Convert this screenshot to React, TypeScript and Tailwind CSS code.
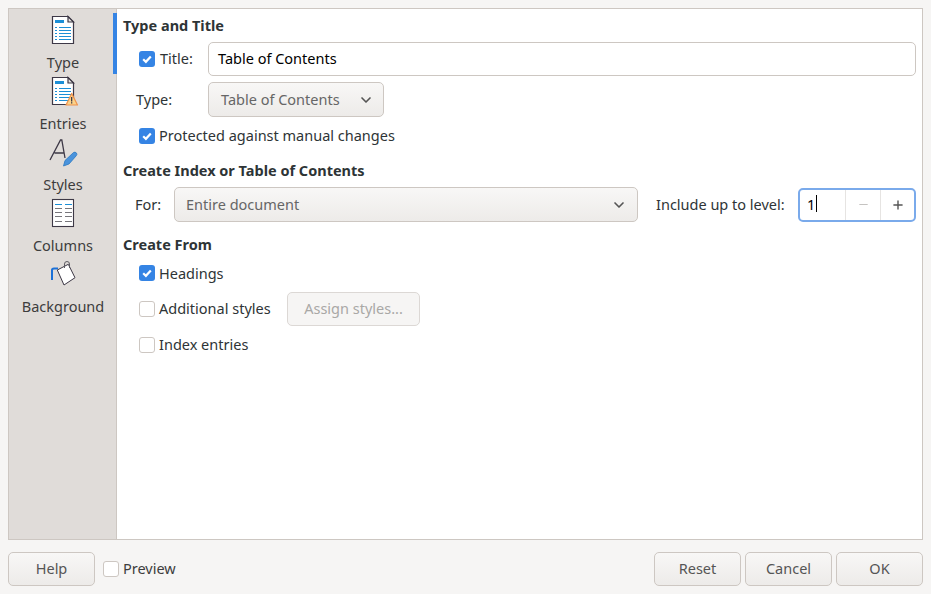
import type { ReactNode } from 'react';
import { ChevronDown, Minus, Plus } from 'lucide-react';

function DocIcon({ warn }: { warn?: boolean }) {
  return (
    <svg width="24" height="30" viewBox="0 0 24 30" className="overflow-visible">
      <path d="M1.5 1.5H17L22.5 7V28.5H1.5Z" fill="#fff" stroke="#3d3846" strokeWidth="1.2" />
      <path d="M17 1.5V7H22.5Z" fill="#e8e6e3" stroke="#3d3846" strokeWidth="1.2" />
      <rect x="4" y="5" width="9" height="3" fill="#1c8fd6" />
      <g fill="#1c8fd6">
        <rect x="4" y="12" width="2" height="1" />
        <rect x="4" y="15" width="2" height="1" />
        <rect x="4" y="18" width="2" height="1" />
        <rect x="4" y="21" width="2" height="1" />
        <rect x="4" y="24" width="2" height="1" />
        <rect x="8" y="12" width="12" height="1" />
        <rect x="8" y="15" width="12" height="1" />
        <rect x="8" y="18" width="12" height="1" />
        <rect x="8" y="21" width="12" height="1" />
        <rect x="8" y="24" width="12" height="1" />
      </g>
      {warn && (
        <g>
          <path d="M20.7 17.5L26.5 29H15Z" fill="#fbd38a" stroke="#f0924a" strokeWidth="1.2" strokeLinejoin="round" />
          <rect x="20" y="21" width="1.3" height="4.5" fill="#3d3846" />
          <rect x="20" y="26.2" width="1.3" height="1.3" fill="#3d3846" />
        </g>
      )}
    </svg>
  );
}

function StylesIcon() {
  return (
    <svg width="30" height="30" viewBox="0 0 30 30">
      <path d="M2 23L12.5 3H13.8L17 21M6.5 16H15.5" fill="none" stroke="#3d3846" strokeWidth="1.3" />
      <path d="M15.5 29L17 23.5L25.5 15.5Q27 14.5 28.5 16Q29.5 17.5 28 19L21 27Z" fill="#4a93dc" stroke="#2a78c2" strokeWidth="0.8" />
    </svg>
  );
}

function ColumnsIcon() {
  return (
    <svg width="24" height="30" viewBox="0 0 24 30">
      <rect x="1.5" y="1.5" width="21" height="27" fill="#fff" stroke="#3d3846" strokeWidth="1.1" />
      <g fill="#1c8fd6">
        <rect x="4" y="6" width="7" height="1" />
        <rect x="14" y="6" width="7" height="1" />
      </g>
      <g fill="#77767b">
        <rect x="4" y="10" width="7" height="1" />
        <rect x="14" y="10" width="7" height="1" />
        <rect x="4" y="14" width="7" height="1" />
        <rect x="14" y="14" width="7" height="1" />
        <rect x="4" y="18" width="7" height="1" />
        <rect x="14" y="18" width="7" height="1" />
        <rect x="4" y="23" width="7" height="1" />
        <rect x="14" y="23" width="7" height="1" />
      </g>
    </svg>
  );
}

function BackgroundIcon() {
  return (
    <svg width="26" height="28" viewBox="0 0 26 28">
      <path d="M2 21V11Q2 9.5 4 9.5H8" fill="none" stroke="#1c71d8" strokeWidth="2" />
      <path d="M7.3 11L18.3 5.3L25 18.7L14 26Z" fill="#fff" stroke="#3d3846" strokeWidth="1" strokeLinejoin="round" />
      <path d="M14.5 9V5Q14.5 2.5 17 2.5Q19.5 2.5 19.5 5V9" fill="none" stroke="#5e5c64" strokeWidth="1" />
    </svg>
  );
}

function CheckBox({ checked, x = '' }: { checked?: boolean; x?: string }) {
  if (checked) {
    return (
      <span className={`flex h-4 w-4 shrink-0 items-center justify-center rounded-[3px] bg-[#3584e4] ${x}`}>
        <svg width="12" height="12" viewBox="0 0 12 12">
          <path d="M2.2 6.2L4.9 8.8L9.8 3.4" fill="none" stroke="#fff" strokeWidth="2.2" />
        </svg>
      </span>
    );
  }
  return <span className={`h-4 w-4 shrink-0 rounded-[3px] border border-[#cdc7c2] bg-white ${x}`} />;
}

function SideItem({ icon, label }: { icon: ReactNode; label: string }) {
  return (
    <div className="flex h-[61px] flex-col items-center">
      <div className="flex h-[37px] items-start justify-center">{icon}</div>
      <span className="text-[#3d3d3d]">{label}</span>
    </div>
  );
}

function FootButton({ label }: { label: string }) {
  return (
    <button className="flex h-[34px] w-[87px] items-center justify-center rounded-[5px] border border-[#cdc7c2] bg-gradient-to-b from-[#f8f7f6] to-[#edebe9] pb-[2px] text-[#555]">
      {label}
    </button>
  );
}

function Heading({ children, mt }: { children: ReactNode; mt: string }) {
  return <div className={`h-5 pl-[6px] font-bold leading-5 text-[#2e3436] ${mt}`}>{children}</div>;
}

export default function App() {
  return (
    <div className="flex h-[594px] w-[931px] flex-col overflow-hidden bg-[#f6f5f4] px-2 pt-2 font-['Noto_Sans',sans-serif] text-[14.5px] leading-5 text-[#2e3436]">
      <div className="flex h-[532px] border border-[#cdc7c2]">
        {/* Sidebar */}
        <div className="relative w-[108px] shrink-0 border-r border-[#cdc7c2] bg-[#e0dcd9] pl-px pt-[6px]">
          <SideItem icon={<DocIcon />} label="Type" />
          <SideItem icon={<DocIcon warn />} label="Entries" />
          <SideItem icon={<StylesIcon />} label="Styles" />
          <SideItem icon={<ColumnsIcon />} label="Columns" />
          <SideItem icon={<BackgroundIcon />} label="Background" />
          <div className="absolute -right-px top-1 h-[61px] w-1 bg-[#3584e4]" />
        </div>

        {/* Content */}
        <div className="flex-1 bg-white pr-[6px] pt-[6px]">
          <Heading mt="">Type and Title</Heading>

          <div className="mt-[7px] flex h-[34px] items-center pl-[22px]">
            <CheckBox checked />
            <span className="ml-[5px] w-[48px] pb-[2px]">Title:</span>
            <div className="flex h-[34px] flex-1 items-center rounded-[5px] border border-[#cdc7c2] bg-white pb-[2px] pl-[9px] text-black">
              Table of Contents
            </div>
          </div>

          <div className="mt-[6px] flex h-[35px] items-center pl-[19px]">
            <span className="w-[72px] pb-[2px]">Type:</span>
            <div className="flex h-[35px] w-[176px] items-center justify-between rounded-[5px] border border-[#cdc7c2] bg-gradient-to-b from-[#f8f7f6] to-[#edebe9] pl-3 pr-[9px] text-[#666]">
              <span className="pb-[2px]">Table of Contents</span>
              <ChevronDown size={16} strokeWidth={2.5} className="text-[#555]" />
            </div>
          </div>

          <div className="mt-[9px] flex h-5 items-center pl-[22px]">
            <CheckBox checked />
            <span className="ml-[4px] pb-[2px]">Protected against manual changes</span>
          </div>

          <Heading mt="mt-[14px]">Create Index or Table of Contents</Heading>

          <div className="mt-[7px] flex h-[35px] items-center pl-[18px]">
            <span className="w-[39px] pb-[2px]">For:</span>
            <div className="flex h-[35px] w-[464px] items-center justify-between rounded-[5px] border border-[#cdc7c2] bg-gradient-to-b from-[#f8f7f6] to-[#edebe9] pl-[11px] pr-[10px] text-[#666]">
              <span className="pb-[2px]">Entire document</span>
              <ChevronDown size={16} strokeWidth={2.5} className="text-[#555]" />
            </div>
            <span className="ml-[18px] w-[142px] pb-[2px]">Include up to level:</span>
            <div className="flex h-[34px] w-[118px] items-stretch rounded-[5px] border-2 border-[#7aaaeb] bg-white">
              <div className="flex flex-1 items-center pb-[2px] pl-[7px] text-black">
                1<span className="ml-px h-[17px] w-px bg-black" />
              </div>
              <div className="flex w-[35px] items-center justify-center border-l border-[#e6e4e2] text-[#c5c3c1]">
                <Minus size={13} strokeWidth={2} />
              </div>
              <div className="flex w-[34px] items-center justify-center border-l border-[#e6e4e2] text-[#555]">
                <Plus size={14} strokeWidth={2.4} />
              </div>
            </div>
          </div>

          <Heading mt="mt-[12px]">Create From</Heading>

          <div className="mt-[9px] flex h-5 items-center pl-[22px]">
            <CheckBox checked />
            <span className="ml-[4px]">Headings</span>
          </div>

          <div className="mt-[9px] flex h-[34px] items-center pl-[22px]">
            <CheckBox />
            <span className="ml-[4px] w-[128px] pb-[2px]">Additional styles</span>
            <div className="flex h-[34px] w-[133px] items-center justify-center rounded-[5px] border border-[#dcd8d5] bg-[#f6f5f4] pb-[2px] text-[#a9a8a6]">
              Assign styles...
            </div>
          </div>

          <div className="mt-[9px] flex h-5 items-center pl-[22px]">
            <CheckBox />
            <span className="ml-[4px] pb-[2px]">Index entries</span>
          </div>
        </div>
      </div>

      {/* Footer */}
      <div className="mt-3 flex items-center">
        <FootButton label="Help" />
        <CheckBox x="ml-2" />
        <span className="ml-[4px] pb-[2px] text-[#3d3d3d]">Preview</span>
        <div className="ml-auto flex gap-1">
          <FootButton label="Reset" />
          <FootButton label="Cancel" />
          <FootButton label="OK" />
        </div>
      </div>
    </div>
  );
}
